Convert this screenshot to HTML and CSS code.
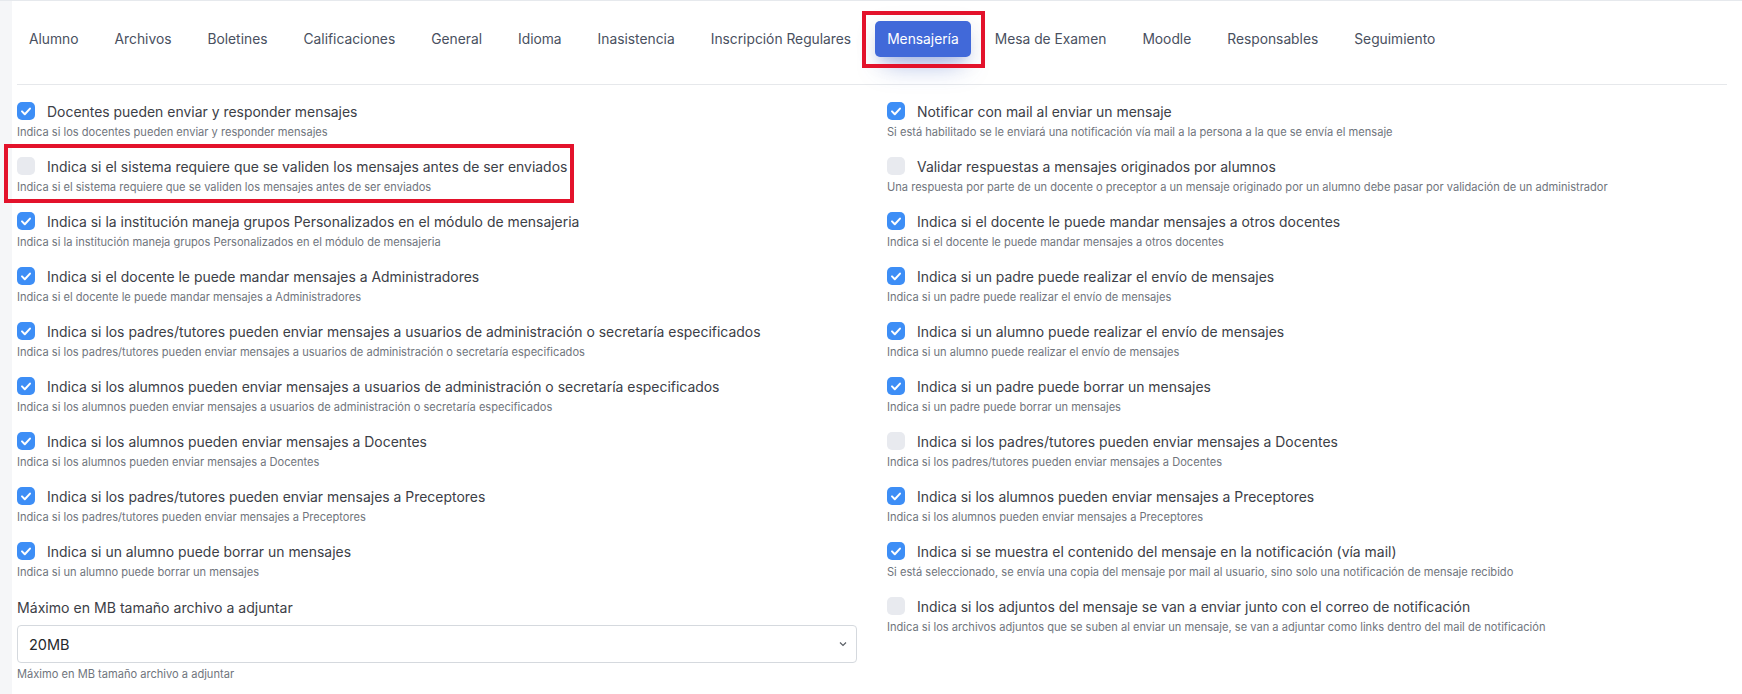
FILE: index.html
```html
<!DOCTYPE html>
<html lang="es">
<head>
<meta charset="utf-8">
<title>Mensajería</title>
<link rel="stylesheet" href="styles.css">
</head>
<body>
<div class="page">
  <div class="card">
    <nav class="tabs">
      <a class="tab">Alumno</a>
      <a class="tab">Archivos</a>
      <a class="tab">Boletines</a>
      <a class="tab">Calificaciones</a>
      <a class="tab">General</a>
      <a class="tab">Idioma</a>
      <a class="tab">Inasistencia</a>
      <a class="tab">Inscripción Regulares</a>
      <a class="tab active">Mensajería<span class="mark mark-tab"></span></a>
      <a class="tab">Mesa de Examen</a>
      <a class="tab">Moodle</a>
      <a class="tab">Responsables</a>
      <a class="tab">Seguimiento</a>
    </nav>
    <div class="grid">
      <div class="col">
        <div class="group">
          <div class="check-row"><span class="cb on"><svg viewBox="0 0 18 18"><rect width="18" height="18" rx="5"/><path d="M5 9.4l2.8 2.8L13 6.6"/></svg></span><span class="label">Docentes pueden enviar y responder mensajes</span></div>
          <div class="help">Indica si los docentes pueden enviar y responder mensajes</div>
        </div>
        <div class="group">
          <span class="mark mark-row"></span>
          <div class="check-row"><span class="cb off"></span><span class="label">Indica si el sistema requiere que se validen los mensajes antes de ser enviados</span></div>
          <div class="help">Indica si el sistema requiere que se validen los mensajes antes de ser enviados</div>
        </div>
        <div class="group">
          <div class="check-row"><span class="cb on"><svg viewBox="0 0 18 18"><rect width="18" height="18" rx="5"/><path d="M5 9.4l2.8 2.8L13 6.6"/></svg></span><span class="label">Indica si la institución maneja grupos Personalizados en el módulo de mensajeria</span></div>
          <div class="help">Indica si la institución maneja grupos Personalizados en el módulo de mensajeria</div>
        </div>
        <div class="group">
          <div class="check-row"><span class="cb on"><svg viewBox="0 0 18 18"><rect width="18" height="18" rx="5"/><path d="M5 9.4l2.8 2.8L13 6.6"/></svg></span><span class="label">Indica si el docente le puede mandar mensajes a Administradores</span></div>
          <div class="help">Indica si el docente le puede mandar mensajes a Administradores</div>
        </div>
        <div class="group">
          <div class="check-row"><span class="cb on"><svg viewBox="0 0 18 18"><rect width="18" height="18" rx="5"/><path d="M5 9.4l2.8 2.8L13 6.6"/></svg></span><span class="label">Indica si los padres/tutores pueden enviar mensajes a usuarios de administración o secretaría especificados</span></div>
          <div class="help">Indica si los padres/tutores pueden enviar mensajes a usuarios de administración o secretaría especificados</div>
        </div>
        <div class="group">
          <div class="check-row"><span class="cb on"><svg viewBox="0 0 18 18"><rect width="18" height="18" rx="5"/><path d="M5 9.4l2.8 2.8L13 6.6"/></svg></span><span class="label">Indica si los alumnos pueden enviar mensajes a usuarios de administración o secretaría especificados</span></div>
          <div class="help">Indica si los alumnos pueden enviar mensajes a usuarios de administración o secretaría especificados</div>
        </div>
        <div class="group">
          <div class="check-row"><span class="cb on"><svg viewBox="0 0 18 18"><rect width="18" height="18" rx="5"/><path d="M5 9.4l2.8 2.8L13 6.6"/></svg></span><span class="label">Indica si los alumnos pueden enviar mensajes a Docentes</span></div>
          <div class="help">Indica si los alumnos pueden enviar mensajes a Docentes</div>
        </div>
        <div class="group">
          <div class="check-row"><span class="cb on"><svg viewBox="0 0 18 18"><rect width="18" height="18" rx="5"/><path d="M5 9.4l2.8 2.8L13 6.6"/></svg></span><span class="label">Indica si los padres/tutores pueden enviar mensajes a Preceptores</span></div>
          <div class="help">Indica si los padres/tutores pueden enviar mensajes a Preceptores</div>
        </div>
        <div class="group">
          <div class="check-row"><span class="cb on"><svg viewBox="0 0 18 18"><rect width="18" height="18" rx="5"/><path d="M5 9.4l2.8 2.8L13 6.6"/></svg></span><span class="label">Indica si un alumno puede borrar un mensajes</span></div>
          <div class="help">Indica si un alumno puede borrar un mensajes</div>
        </div>
        <div class="group select-group">
          <div class="field-label">Máximo en MB tamaño archivo a adjuntar</div>
          <div class="select"><span>20MB</span><svg viewBox="0 0 8 6"><path d="M1 1.5l3 3 3-3"/></svg></div>
          <div class="help">Máximo en MB tamaño archivo a adjuntar</div>
        </div>
      </div>
      <div class="col">
        <div class="group">
          <div class="check-row"><span class="cb on"><svg viewBox="0 0 18 18"><rect width="18" height="18" rx="5"/><path d="M5 9.4l2.8 2.8L13 6.6"/></svg></span><span class="label">Notificar con mail al enviar un mensaje</span></div>
          <div class="help">Si está habilitado se le enviará una notificación vía mail a la persona a la que se envía el mensaje</div>
        </div>
        <div class="group">
          <div class="check-row"><span class="cb off"></span><span class="label">Validar respuestas a mensajes originados por alumnos</span></div>
          <div class="help">Una respuesta por parte de un docente o preceptor a un mensaje originado por un alumno debe pasar por validación de un administrador</div>
        </div>
        <div class="group">
          <div class="check-row"><span class="cb on"><svg viewBox="0 0 18 18"><rect width="18" height="18" rx="5"/><path d="M5 9.4l2.8 2.8L13 6.6"/></svg></span><span class="label">Indica si el docente le puede mandar mensajes a otros docentes</span></div>
          <div class="help">Indica si el docente le puede mandar mensajes a otros docentes</div>
        </div>
        <div class="group">
          <div class="check-row"><span class="cb on"><svg viewBox="0 0 18 18"><rect width="18" height="18" rx="5"/><path d="M5 9.4l2.8 2.8L13 6.6"/></svg></span><span class="label">Indica si un padre puede realizar el envío de mensajes</span></div>
          <div class="help">Indica si un padre puede realizar el envío de mensajes</div>
        </div>
        <div class="group">
          <div class="check-row"><span class="cb on"><svg viewBox="0 0 18 18"><rect width="18" height="18" rx="5"/><path d="M5 9.4l2.8 2.8L13 6.6"/></svg></span><span class="label">Indica si un alumno puede realizar el envío de mensajes</span></div>
          <div class="help">Indica si un alumno puede realizar el envío de mensajes</div>
        </div>
        <div class="group">
          <div class="check-row"><span class="cb on"><svg viewBox="0 0 18 18"><rect width="18" height="18" rx="5"/><path d="M5 9.4l2.8 2.8L13 6.6"/></svg></span><span class="label">Indica si un padre puede borrar un mensajes</span></div>
          <div class="help">Indica si un padre puede borrar un mensajes</div>
        </div>
        <div class="group">
          <div class="check-row"><span class="cb off"></span><span class="label">Indica si los padres/tutores pueden enviar mensajes a Docentes</span></div>
          <div class="help">Indica si los padres/tutores pueden enviar mensajes a Docentes</div>
        </div>
        <div class="group">
          <div class="check-row"><span class="cb on"><svg viewBox="0 0 18 18"><rect width="18" height="18" rx="5"/><path d="M5 9.4l2.8 2.8L13 6.6"/></svg></span><span class="label">Indica si los alumnos pueden enviar mensajes a Preceptores</span></div>
          <div class="help">Indica si los alumnos pueden enviar mensajes a Preceptores</div>
        </div>
        <div class="group">
          <div class="check-row"><span class="cb on"><svg viewBox="0 0 18 18"><rect width="18" height="18" rx="5"/><path d="M5 9.4l2.8 2.8L13 6.6"/></svg></span><span class="label">Indica si se muestra el contenido del mensaje en la notificación (vía mail)</span></div>
          <div class="help">Si está seleccionado, se envía una copia del mensaje por mail al usuario, sino solo una notificación de mensaje recibido</div>
        </div>
        <div class="group">
          <div class="check-row"><span class="cb off"></span><span class="label">Indica si los adjuntos del mensaje se van a enviar junto con el correo de notificación</span></div>
          <div class="help">Indica si los archivos adjuntos que se suben al enviar un mensaje, se van a adjuntar como links dentro del mail de notificación</div>
        </div>
      </div>
    </div>
  </div>
</div>
</body>
</html>
```

FILE: styles.css
```css
* { box-sizing: border-box; }
html, body { margin: 0; padding: 0; }
body {
  background: #f5f6f8;
  font-family: Inter, "Open Sans", sans-serif;
  color: #3c4047;
  overflow: hidden;
}
.page {
  border-top: 1px solid #e6e9ed;
  padding-left: 12px;
  height: 694px;
}
.card {
  background: #fff;
  height: 100%;
  padding: 0 15px 0 5px;
}
.tabs {
  display: flex;
  align-items: center;
  gap: 12px;
  padding: 20px 0 27px 0;
  border-bottom: 1px solid #e6e8eb;
}
.tab {
  position: relative;
  display: flex;
  align-items: center;
  height: 36px;
  padding: 0 12px;
  font-size: 13.8px;
  color: #495060;
  white-space: nowrap;
  border-radius: 5px;
}
.tab.active {
  background: #4169d9;
  color: #fff;
  box-shadow: 0 16px 26px -10px rgba(63,106,216,0.5), 0 4px 25px 0 rgba(0,0,0,0.08), 0 8px 10px -5px rgba(63,106,216,0.2);
}
.mark {
  position: absolute;
  border: 4px solid #e3122b;
  pointer-events: none;
}
.mark-tab {
  left: -13px; top: -10px; right: -14px; bottom: -11px;
}
.grid {
  display: grid;
  grid-template-columns: 1fr 1fr;
  column-gap: 30px;
  padding-top: 16px;
}
.group {
  position: relative;
  margin-bottom: 16px;
}
.mark-row {
  left: -13px; top: -12px; width: 570px; height: 59px;
}
.check-row {
  display: flex;
  align-items: center;
  height: 20px;
  gap: 12px;
}
.cb {
  flex: none;
  width: 18px;
  height: 18px;
  border-radius: 5px;
  display: block;
}
.cb svg { display: block; width: 18px; height: 18px; }
.cb svg rect { fill: #3d8ef6; }
.cb svg path { fill: none; stroke: #fff; stroke-width: 2; stroke-linecap: round; stroke-linejoin: round; }
.cb.off { background: #e8eaef; }
.label {
  font-size: 13.95px;
  color: #3c4047;
  white-space: nowrap;
}
.help {
  margin-top: 3px;
  font-size: 11.1px;
  line-height: 16px;
  color: #70757d;
  white-space: nowrap;
}
.select-group { padding-top: 2px; }
.field-label {
  font-size: 14.1px;
  line-height: 20px;
  color: #3c4047;
  margin-bottom: 7px;
}
.select {
  height: 38px;
  border: 1px solid #d5d9de;
  border-radius: 4px;
  display: flex;
  align-items: center;
  justify-content: space-between;
  padding: 0 9px 0 11px;
  font-size: 14.5px;
  color: #25282c;
}
.select svg { width: 8px; height: 6px; }
.select svg path { fill: none; stroke: #5a5f66; stroke-width: 1.2; }
```
